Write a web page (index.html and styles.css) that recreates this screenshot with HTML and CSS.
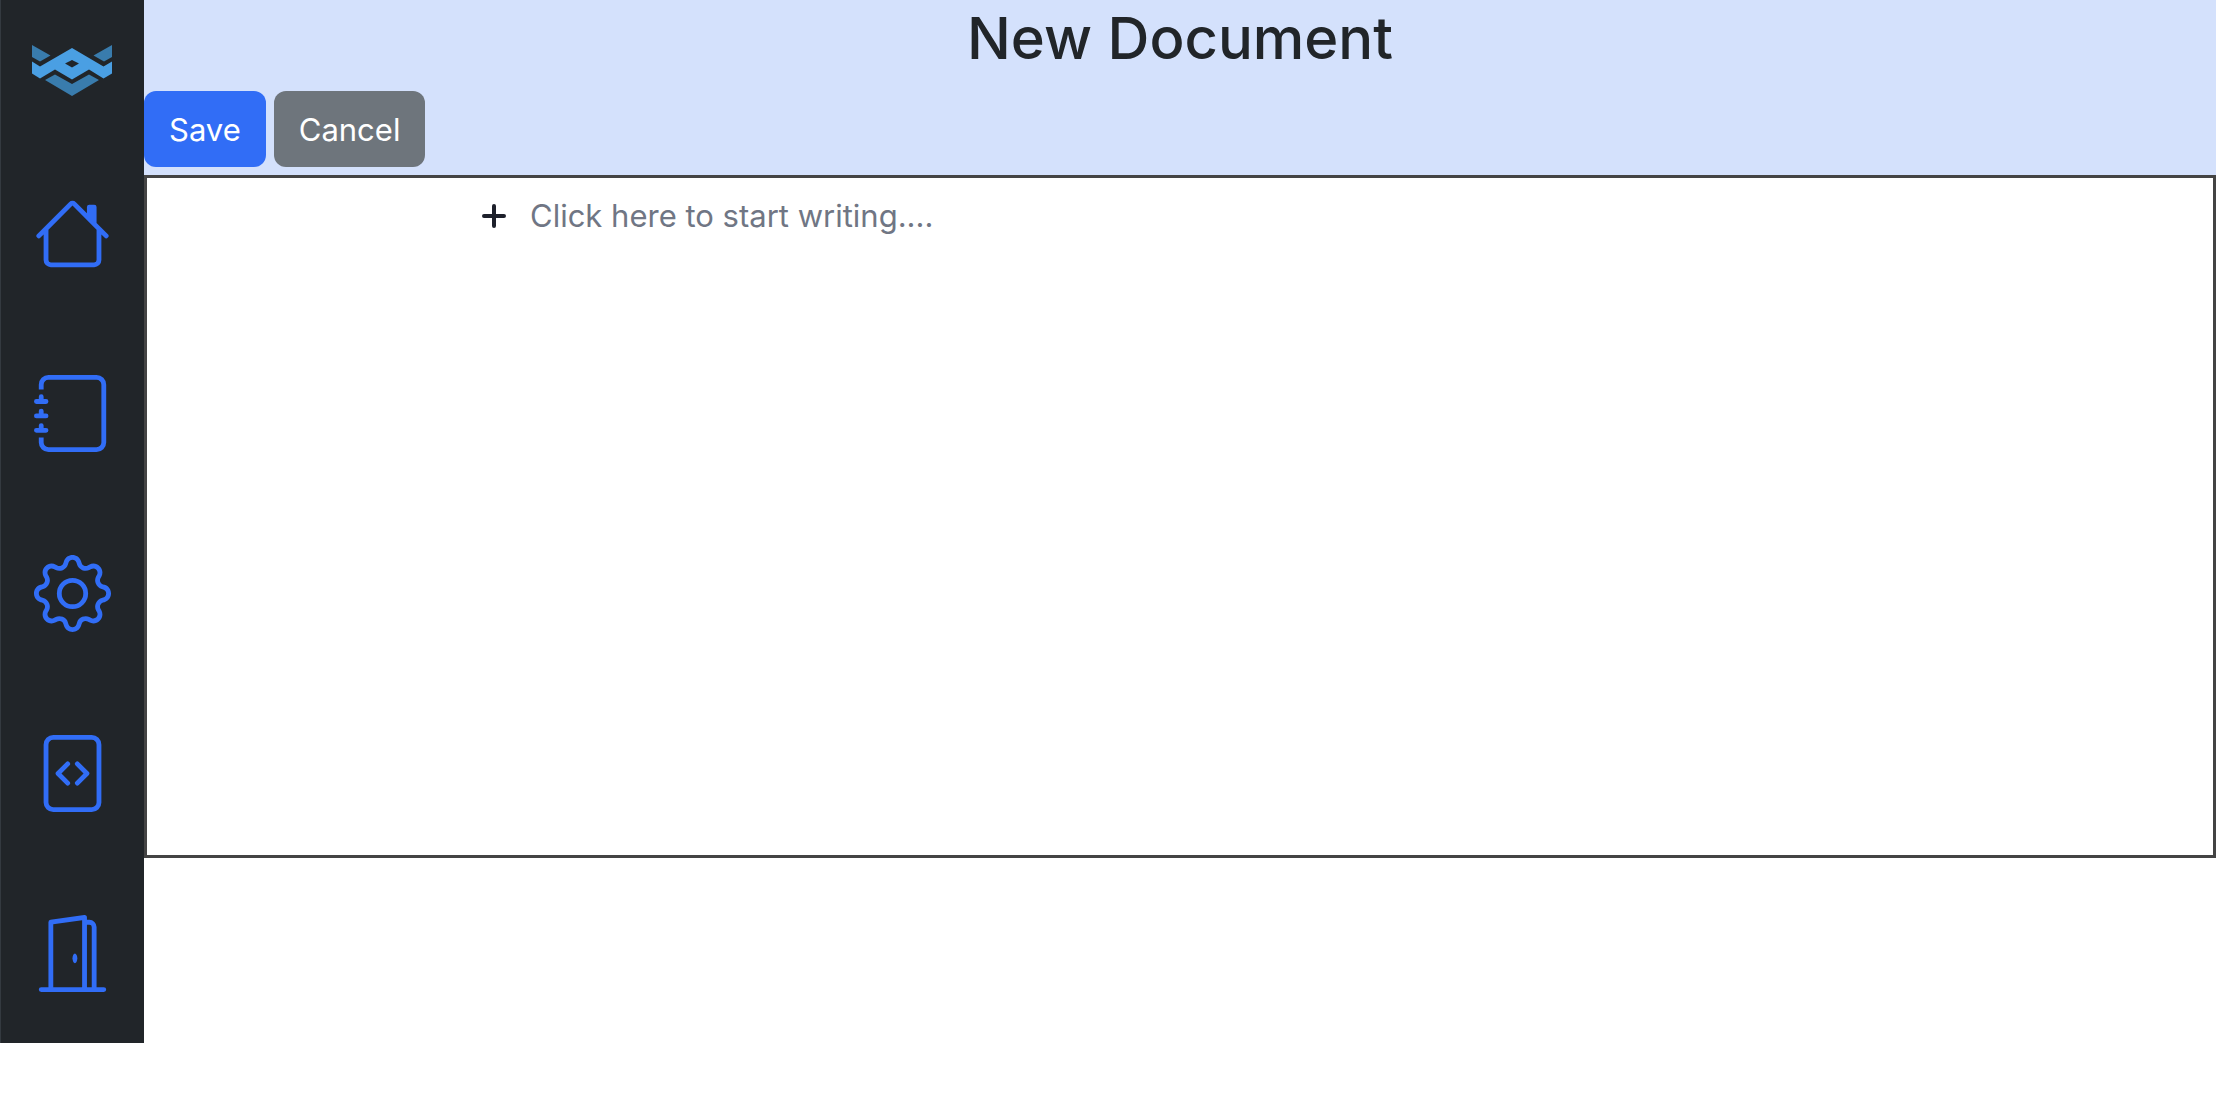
FILE: index.html
```html
<!DOCTYPE html>
<html lang="en">
<head>
<meta charset="utf-8">
<meta name="viewport" content="width=device-width, initial-scale=1">
<title>New Document</title>
<link rel="stylesheet" href="styles.css">
</head>
<body>
<div class="app">
  <nav class="sidebar" aria-label="Main">
    <a class="brand" href="#" aria-label="Start">
      <svg class="brand-logo" viewBox="0 0 80 52" aria-hidden="true">
        <path class="logo-dark" d="M0 0 18.500 10.500 8 16.500 0 12zM80 0 61.500 10.500 72 16.500 80 12zM13 35 23 29.500 40 39 57 29.500 67 35 40 51z"/>
        <path class="logo-light" fill-rule="evenodd" d="M40 3 71.500 21.500 80 16.500V28.500L71.500 33.500 57 24.500 40 34.500 23 24.500 8 33.500 0 28.500V16.500L8 21.500zM40 15 33 18.500 40 22.500 47 18.500z"/>
      </svg>
    </a>
    <a class="nav-link" href="#" aria-label="Home">
      <svg class="nav-icon" viewBox="0 0 16 16" aria-hidden="true"><path d="M8.707 1.5a1 1 0 0 0-1.414 0L.646 8.146a.5.5 0 0 0 .708.708L2 8.207V13.500A1.500 1.500 0 0 0 3.500 15h9a1.500 1.500 0 0 0 1.500-1.500V8.207l.646.647a.5.5 0 0 0 .708-.708L13 5.793V2.500a.5.5 0 0 0-.5-.5h-1a.5.5 0 0 0-.5.5v1.293zM13 7.207V13.500a.5.5 0 0 1-.5.5h-9a.5.5 0 0 1-.5-.5V7.207l5-5z"/></svg>
    </a>
    <a class="nav-link" href="#" aria-label="Documents">
      <svg class="nav-icon" viewBox="0 0 16 16" aria-hidden="true"><path d="M3 0h10a2 2 0 0 1 2 2v12a2 2 0 0 1-2 2H3a2 2 0 0 1-2-2v-1h1v1a1 1 0 0 0 1 1h10a1 1 0 0 0 1-1V2a1 1 0 0 0-1-1H3a1 1 0 0 0-1 1v1H1V2a2 2 0 0 1 2-2"/><path d="M1 5v-.5a.5.5 0 0 1 1 0V5h.5a.5.5 0 0 1 0 1h-2a.5.5 0 0 1 0-1zm0 3v-.5a.5.5 0 0 1 1 0V8h.5a.5.5 0 0 1 0 1h-2a.5.5 0 0 1 0-1zm0 3v-.5a.5.5 0 0 1 1 0v.5h.5a.5.5 0 0 1 0 1h-2a.5.5 0 0 1 0-1z"/></svg>
    </a>
    <a class="nav-link" href="#" aria-label="Settings">
      <svg class="nav-icon" viewBox="0 0 16 16" aria-hidden="true"><path d="M8 4.754a3.246 3.246 0 1 0 0 6.492 3.246 3.246 0 0 0 0-6.492M5.754 8a2.246 2.246 0 1 1 4.492 0 2.246 2.246 0 0 1-4.492 0"/><path d="M9.796 1.343c-.527-1.790-3.065-1.790-3.592 0l-.094.319a.873.873 0 0 1-1.255.52l-.292-.16c-1.640-.892-3.433.902-2.540 2.541l.159.292a.873.873 0 0 1-.52 1.255l-.319.094c-1.790.527-1.790 3.065 0 3.592l.319.094a.873.873 0 0 1 .52 1.255l-.16.292c-.892 1.640.901 3.434 2.541 2.540l.292-.159a.873.873 0 0 1 1.255.52l.094.319c.527 1.790 3.065 1.790 3.592 0l.094-.319a.873.873 0 0 1 1.255-.52l.292.16c1.640.893 3.434-.902 2.540-2.541l-.159-.292a.873.873 0 0 1 .52-1.255l.319-.094c1.790-.527 1.790-3.065 0-3.592l-.319-.094a.873.873 0 0 1-.52-1.255l.16-.292c.893-1.640-.902-3.433-2.541-2.540l-.292.159a.873.873 0 0 1-1.255-.52zm-2.633.283c.246-.835 1.428-.835 1.674 0l.094.319a1.873 1.873 0 0 0 2.693 1.115l.291-.16c.764-.415 1.600.42 1.184 1.185l-.159.292a1.873 1.873 0 0 0 1.116 2.692l.318.094c.835.246.835 1.428 0 1.674l-.319.094a1.873 1.873 0 0 0-1.115 2.693l.16.291c.415.764-.42 1.600-1.185 1.184l-.291-.159a1.873 1.873 0 0 0-2.693 1.116l-.094.318c-.246.835-1.428.835-1.674 0l-.094-.319a1.873 1.873 0 0 0-2.692-1.115l-.292.16c-.764.415-1.600-.42-1.184-1.185l.159-.291A1.873 1.873 0 0 0 1.945 8.930l-.319-.094c-.835-.246-.835-1.428 0-1.674l.319-.094A1.873 1.873 0 0 0 3.060 4.377l-.16-.292c-.415-.764.42-1.600 1.185-1.184l.292.159a1.873 1.873 0 0 0 2.692-1.115z"/></svg>
    </a>
    <a class="nav-link" href="#" aria-label="Code">
      <svg class="nav-icon" viewBox="0 0 16 16" aria-hidden="true"><path d="M6.646 5.646a.5.5 0 1 1 .708.708L5.707 8l1.647 1.646a.5.5 0 0 1-.708.708l-2-2a.5.5 0 0 1 0-.708zm2.708 0a.5.5 0 1 0-.708.708L10.293 8 8.646 9.646a.5.5 0 0 0 .708.708l2-2a.5.5 0 0 0 0-.708z"/><path d="M2 2a2 2 0 0 1 2-2h8a2 2 0 0 1 2 2v12a2 2 0 0 1-2 2H4a2 2 0 0 1-2-2zm10-1H4a1 1 0 0 0-1 1v12a1 1 0 0 0 1 1h8a1 1 0 0 0 1-1V2a1 1 0 0 0-1-1"/></svg>
    </a>
    <a class="nav-link" href="#" aria-label="Sign out">
      <svg class="nav-icon" viewBox="0 0 16 16" aria-hidden="true"><path d="M8.500 10c-.276 0-.5-.448-.5-1s.224-1 .5-1 .5.448.5 1-.224 1-.5 1"/><path d="M10.828.122A.5.5 0 0 1 11 .5V1h.5A1.500 1.500 0 0 1 13 2.500V15h1.500a.5.5 0 0 1 0 1h-13a.5.5 0 0 1 0-1H3V1.500a.5.5 0 0 1 .43-.495l7-1a.5.5 0 0 1 .398.117M11.500 2H11v13h1V2.500a.5.5 0 0 0-.5-.5M4 1.934V15h6V1.077z"/></svg>
    </a>
  </nav>
  <main class="page">
    <header class="page-header">
      <h1 class="title">New Document</h1>
      <div class="actions">
        <button class="btn btn-primary" type="button">Save</button>
        <button class="btn btn-secondary" type="button">Cancel</button>
      </div>
    </header>
    <section class="editor" aria-label="Editor">
      <div class="block">
        <button class="add-block" type="button" aria-label="Add block">
          <svg class="add-icon" viewBox="0 0 24 24" aria-hidden="true"><path d="M12 2v20M2 12h20"/></svg>
        </button>
        <input class="block-input" type="text" aria-label="Document text" placeholder="Click here to start writing....">
      </div>
    </section>
  </main>
</div>
</body>
</html>
```
FILE: styles.css
```css
*,
*::before,
*::after {
  box-sizing: border-box;
}

body {
  margin: 0;
  background: #fff;
  color: #212529;
  font-family: Inter, "Liberation Sans", sans-serif;
  font-size: 31px;
  line-height: 48px;
}

.app {
  display: flex;
  align-items: flex-start;
}

.sidebar {
  display: flex;
  flex: none;
  flex-direction: column;
  width: 144px;
  background: #212529;
  box-shadow: inset 1px 0 #343a40;
}

.brand,
.nav-link {
  display: flex;
  align-items: center;
  justify-content: center;
}

.brand {
  height: 143px;
  padding-bottom: 2px;
}

.nav-link {
  height: 180px;
  color: #316df6;
}

.brand-logo {
  width: 80px;
  height: 52px;
}

.logo-dark {
  fill: #397cad;
}

.logo-light {
  fill: #4a9fe3;
}

.nav-icon {
  width: 77px;
  height: 77px;
  fill: currentColor;
}

.page {
  flex: 1;
  min-width: 0;
}

.page-header {
  padding-bottom: 8px;
  background: #d4e1fc;
}

.title {
  margin: 0 0 15px;
  font-size: 58px;
  font-weight: 500;
  line-height: 76px;
  text-align: center;
}

.actions {
  display: flex;
  gap: 8px;
}

.btn {
  padding: 15px 25px 13px;
  border: 0;
  border-radius: 12px;
  color: #fff;
  font: inherit;
}

.btn-primary {
  background: #316df6;
}

.btn-secondary {
  background: #6e757c;
}

.editor {
  min-height: 683px;
  padding: 14px 335px;
  border: 3px solid #444;
}

.block {
  display: flex;
  align-items: center;
  gap: 24px;
}

.add-block {
  display: flex;
  padding: 0;
  border: 0;
  background: none;
  color: #1d202b;
}

.add-icon {
  width: 24px;
  height: 24px;
  fill: none;
  stroke: currentColor;
  stroke-width: 4;
  stroke-linecap: round;
}

.block-input {
  flex: 1;
  min-width: 0;
  height: 48px;
  padding: 0;
  border: 0;
  outline: 0;
  background: none;
  color: inherit;
  font: inherit;
}

.block-input::placeholder {
  color: #707684;
  opacity: 1;
}
```
